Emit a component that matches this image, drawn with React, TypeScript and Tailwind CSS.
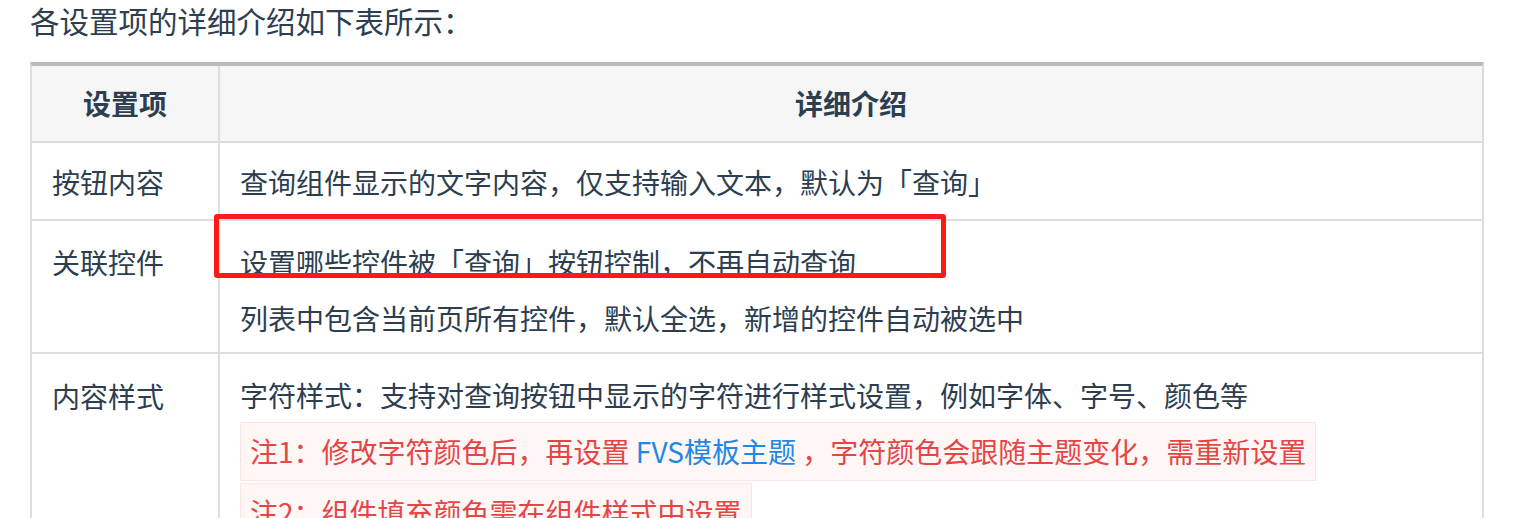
import React from 'react';

const font = { fontFamily: '"Noto Sans CJK SC", "Noto Sans", sans-serif' };

export default function App() {
  return (
    <div className="relative h-[518px] w-full overflow-hidden bg-white text-[#2c3e50]" style={font}>
      <div className="pl-[30px] text-[29.5px] leading-[40px]">各设置项的详细介绍如下表所示：</div>

      <div className="ml-[30px] mt-[22px] w-[1454px] border-x-2 border-t-4 border-x-[#ddd] border-t-[#bbb] text-[28px]">
        {/* header */}
        <div className="grid grid-cols-[188px_1fr] border-b-2 border-[#ddd] bg-[#f6f6f6] font-bold">
          <div className="border-r-2 border-[#ddd] py-[9px] text-center leading-[57px]">设置项</div>
          <div className="py-[9px] text-center leading-[57px]">详细介绍</div>
        </div>

        {/* row 1 */}
        <div className="grid grid-cols-[188px_1fr] border-b-2 border-[#ddd]">
          <div className="border-r-2 border-[#ddd] px-[20px] pt-[11px] pb-[9px] leading-[56px]">按钮内容</div>
          <div className="px-[20px] pt-[11px] pb-[9px] leading-[56px]">
            查询组件显示的文字内容，仅支持输入文本，默认为「查询」
          </div>
        </div>

        {/* row 2 */}
        <div className="grid grid-cols-[188px_1fr] border-b-2 border-[#ddd]">
          <div className="border-r-2 border-[#ddd] px-[20px] pt-[13px] leading-[56px]">关联控件</div>
          <div className="px-[20px] pt-[13px] pb-[6px] leading-[56px]">
            <p>设置哪些控件被「查询」按钮控制，不再自动查询</p>
            <p>列表中包含当前页所有控件，默认全选，新增的控件自动被选中</p>
          </div>
        </div>

        {/* row 3 */}
        <div className="grid grid-cols-[188px_1fr] border-b-2 border-[#ddd]">
          <div className="border-r-2 border-[#ddd] px-[20px] pt-[14px] leading-[56px]">内容样式</div>
          <div className="px-[20px] pt-[14px] pb-[10px]">
            <p className="leading-[54px]">字符样式：支持对查询按钮中显示的字符进行样式设置，例如字体、字号、颜色等</p>
            <div className="flex flex-col items-start gap-[2px]">
              <span className="border border-[#fde4e4] bg-[#fff6f6] px-[9px] leading-[57px] text-[#e64545]">
                注1：修改字符颜色后，再设置 <a className="text-[#1e88e5]">FVS模板主题</a> ，字符颜色会跟随主题变化，需重新设置
              </span>
              <span className="border border-[#fde4e4] bg-[#fff6f6] px-[9px] leading-[57px] text-[#e64545]">
                注2：组件填充颜色需在组件样式中设置
              </span>
            </div>
          </div>
        </div>
      </div>

      {/* annotation overlay */}
      <div className="absolute left-[214px] top-[214px] h-[64px] w-[732px] rounded-[3px] border-[5px] border-[#ff1a1a]" />
    </div>
  );
}
